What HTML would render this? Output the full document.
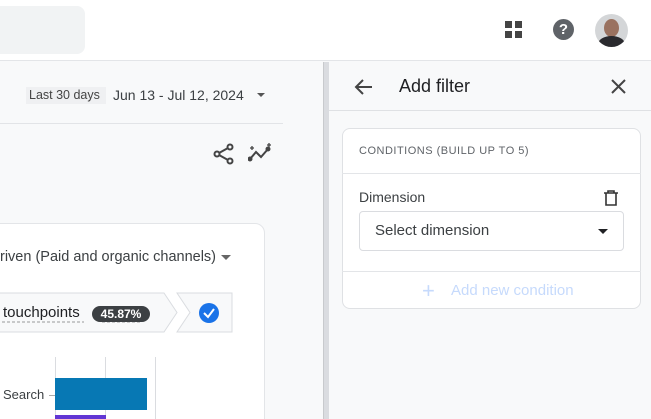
<!DOCTYPE html>
<html style="width:651px;height:419px;overflow:hidden"><head><style>
*{margin:0;padding:0;box-sizing:border-box}
body{width:651px;height:419px;overflow:hidden;background:#f8f9fa;font-family:"Liberation Sans",Arial,sans-serif;position:relative;color:#3c4043}
.a{position:absolute}
</style></head><body>
<div class="a" style="left:0;top:0;width:651px;height:61px;background:#fff;border-bottom:1px solid #e3e5e8"></div>
<div class="a" style="left:-10px;top:6px;width:95px;height:48px;background:#f1f3f4;border-radius:8px"></div>
<svg class="a" style="left:504px;top:20px" width="20" height="20"><rect x="1" y="1" width="7" height="7" fill="#444"/><rect x="11" y="1" width="7" height="7" fill="#444"/><rect x="1" y="11" width="7" height="7" fill="#444"/><rect x="11" y="11" width="7" height="7" fill="#444"/></svg>
<div class="a" style="left:553px;top:19px;width:21px;height:21px;border-radius:50%;background:#5f6368;color:#fff;font-weight:bold;font-size:15px;text-align:center;line-height:21px">?</div>
<div class="a" style="left:595px;top:14px;width:33px;height:33px;border-radius:50%;overflow:hidden;background:#d4d6d8"><div class="a" style="left:9px;top:5px;width:15px;height:18px;border-radius:50%;background:#9a7260"></div><div class="a" style="left:3px;top:22px;width:27px;height:16px;border-radius:50% 50% 0 0;background:#2a2a2e"></div></div>
<!-- left -->
<div class="a" style="left:26px;top:87px;width:80px;height:17px;background:#eff0f2"></div>
<div class="a" style="left:29px;top:88px;font-size:12.5px;color:#444">Last 30 days</div>
<div class="a" style="left:113px;top:87px;font-size:14px;color:#3c4043">Jun 13 - Jul 12, 2024</div>
<div class="a" style="left:257px;top:93px;border-left:4px solid transparent;border-right:4px solid transparent;border-top:4px solid #555"></div>
<div class="a" style="left:0;top:123px;width:283px;height:1px;background:#e2e4e7"></div>
<svg class="a" style="left:212px;top:142px" width="24" height="24" fill="none" stroke="#444" stroke-width="2"><circle cx="18" cy="5" r="2.5"/><circle cx="5" cy="12" r="2.5"/><circle cx="18" cy="19" r="2.5"/><path d="M7 11 16 6M7 13 16 18"/></svg>
<svg class="a" style="left:248px;top:142px" width="26" height="22" fill="none" stroke="#444" stroke-width="2"><path d="M2 17 8 10 13 15 20 7"/><circle cx="2" cy="17" r="1.5" fill="#444"/><circle cx="20" cy="7" r="1.5" fill="#444"/><path d="M4 4v4M2 6h4M21 1v4M19 3h4" stroke-width="1.3"/></svg>
<div class="a" style="left:-10px;top:223px;width:275px;height:206px;background:#fff;border:1px solid #e3e5e8;border-radius:10px"></div>
<div class="a" style="left:0;top:249px;font-size:14.5px;color:#3c4043;white-space:nowrap">riven (Paid and organic channels)</div>
<div class="a" style="left:221px;top:255px;border-left:5px solid transparent;border-right:5px solid transparent;border-top:5px solid #666"></div>
<svg class="a" style="left:0;top:292px" width="236" height="42"><path d="M-2 1H164L177 20.5 164 40H-2Z" fill="#f8f9fa" stroke="#dadce0"/><path d="M177 1H232V40H177L190 20.5Z" fill="#f8f9fa" stroke="#dadce0"/><circle cx="209" cy="21" r="10" fill="#1a73e8"/><path d="M204 21 208 25 214 17" fill="none" stroke="#fff" stroke-width="2"/><path d="M2 30H84M102 30H142" stroke="#999" stroke-dasharray="3 2"/></svg>
<div class="a" style="left:3px;top:304px;font-size:15px;color:#202124">touchpoints</div>
<div class="a" style="left:92px;top:306px;width:58px;height:16px;border-radius:8px;background:#3c4043;color:#fff;font-size:12px;font-weight:bold;text-align:center;line-height:16px">45.87%</div>
<div class="a" style="left:55px;top:357px;width:1px;height:62px;background:#dadce0"></div>
<div class="a" style="left:105px;top:357px;width:1px;height:62px;background:#dadce0"></div>
<div class="a" style="left:155px;top:357px;width:1px;height:62px;background:#dadce0"></div>
<div class="a" style="left:3px;top:387px;font-size:13px;color:#3c4043">Search</div>
<div class="a" style="left:49px;top:395px;width:6px;height:1px;background:#aaa"></div>
<div class="a" style="left:55px;top:378px;width:92px;height:32px;background:#0778b4"></div>
<div class="a" style="left:55px;top:415px;width:51px;height:4px;background:#6236d4"></div>
<!-- divider -->
<div class="a" style="left:323px;top:62px;width:6px;height:357px;background:#dadce0;border-left:1px solid #c8cacd"></div>
<!-- panel -->
<div class="a" style="left:329px;top:62px;width:322px;height:357px;background:#f8f9fa"></div>
<div class="a" style="left:329px;top:110px;width:322px;height:1px;background:#dfe1e4"></div>
<svg class="a" style="left:354px;top:77px" width="20" height="20" fill="none" stroke="#444" stroke-width="2"><path d="M18 10H3M9 3 2 10 9 17"/></svg>
<div class="a" style="left:399px;top:76px;font-size:18px;color:#202124">Add filter</div>
<svg class="a" style="left:610px;top:78px" width="17" height="17" stroke="#444" stroke-width="2"><path d="M2 2 15 15M15 2 2 15"/></svg>
<div class="a" style="left:342px;top:128px;width:299px;height:181px;background:#fff;border:1px solid #dfe1e4;border-radius:8px"></div>
<div class="a" style="left:342px;top:173px;width:299px;height:1px;background:#e3e5e8"></div>
<div class="a" style="left:342px;top:271px;width:299px;height:1px;background:#e3e5e8"></div>
<div class="a" style="left:359px;top:145px;font-size:11px;letter-spacing:0.5px;color:#5f6368">CONDITIONS (BUILD UP TO 5)</div>
<div class="a" style="left:359px;top:189px;font-size:14px;color:#3c4043">Dimension</div>
<svg class="a" style="left:603px;top:190px" width="16" height="16" fill="none" stroke="#333" stroke-width="1.6"><path d="M1 3H15M5 3V1H11V3M3 3V15H13V3"/></svg>
<div class="a" style="left:359px;top:211px;width:265px;height:40px;border:1px solid #dadce0;border-radius:4px;background:#fff"></div>
<div class="a" style="left:375px;top:222px;font-size:15px;color:#3c4043">Select dimension</div>
<div class="a" style="left:598px;top:229px;border-left:5px solid transparent;border-right:5px solid transparent;border-top:5px solid #202124"></div>
<div class="a" style="left:422px;top:278px;font-size:22px;color:#c6dafc">+</div>
<div class="a" style="left:451px;top:282px;font-size:15px;color:#c6dafc">Add new condition</div>
</body></html>
